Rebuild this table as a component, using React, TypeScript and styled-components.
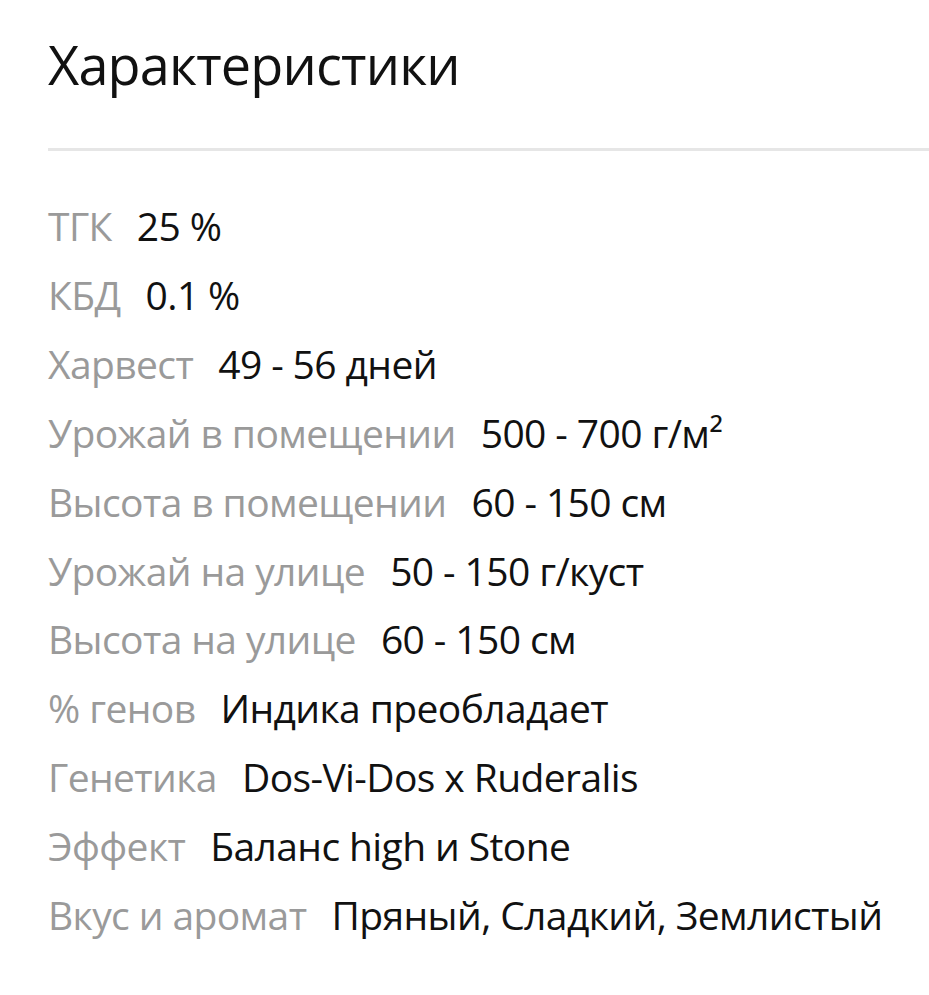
import React from 'react';
import styled, {createGlobalStyle} from 'styled-components';

const GlobalStyle = createGlobalStyle`
  html, body { margin: 0; padding: 0; background: #fff; }
  body { font-family: "Open Sans", "Noto Sans", sans-serif; overflow: hidden; }
`;

const Section = styled.section`
  padding: 30px 0 0 48px;
`;

const Title = styled.h2`
  margin: 0;
  font-size: 54px;
  line-height: 68px;
  font-weight: 400;
  color: #111;
  letter-spacing: -0.8px;
`;

const Divider = styled.hr`
  margin: 50px 0 41px;
  border: none;
  height: 3px;
  background: #e6e6e6;
`;

const List = styled.dl`
  margin: 0;
  display: flex;
  flex-direction: column;
`;

const Row = styled.div`
  display: flex;
  align-items: baseline;
  gap: 25px;
  font-size: 39px;
  line-height: 68.9px;
  letter-spacing: -0.6px;
`;

const Label = styled.dt`
  color: #9a9a9a;
`;

const Value = styled.dd`
  margin: 0;
  color: #111;
`;

const specs: Array<[string, string]> = [
    ['ТГК', '25 %'],
    ['КБД', '0.1 %'],
    ['Харвест', '49 - 56 дней'],
    ['Урожай в помещении', '500 - 700 г/м²'],
    ['Высота в помещении', '60 - 150 см'],
    ['Урожай на улице', '50 - 150 г/куст'],
    ['Высота на улице', '60 - 150 см'],
    ['% генов', 'Индика преобладает'],
    ['Генетика', 'Dos-Vi-Dos x Ruderalis'],
    ['Эффект', 'Баланс high и Stone'],
    ['Вкус и аромат', 'Пряный, Сладкий, Землистый'],
];

const App = () => {
    return (
        <>
            <GlobalStyle/>
            <Section>
                <Title>Характеристики</Title>
                <Divider/>
                <List>
                    {specs.map(([label, value]) => (
                        <Row key={label}>
                            <Label>{label}</Label>
                            <Value>{value}</Value>
                        </Row>
                    ))}
                </List>
            </Section>
        </>
    );
};

export default App;
